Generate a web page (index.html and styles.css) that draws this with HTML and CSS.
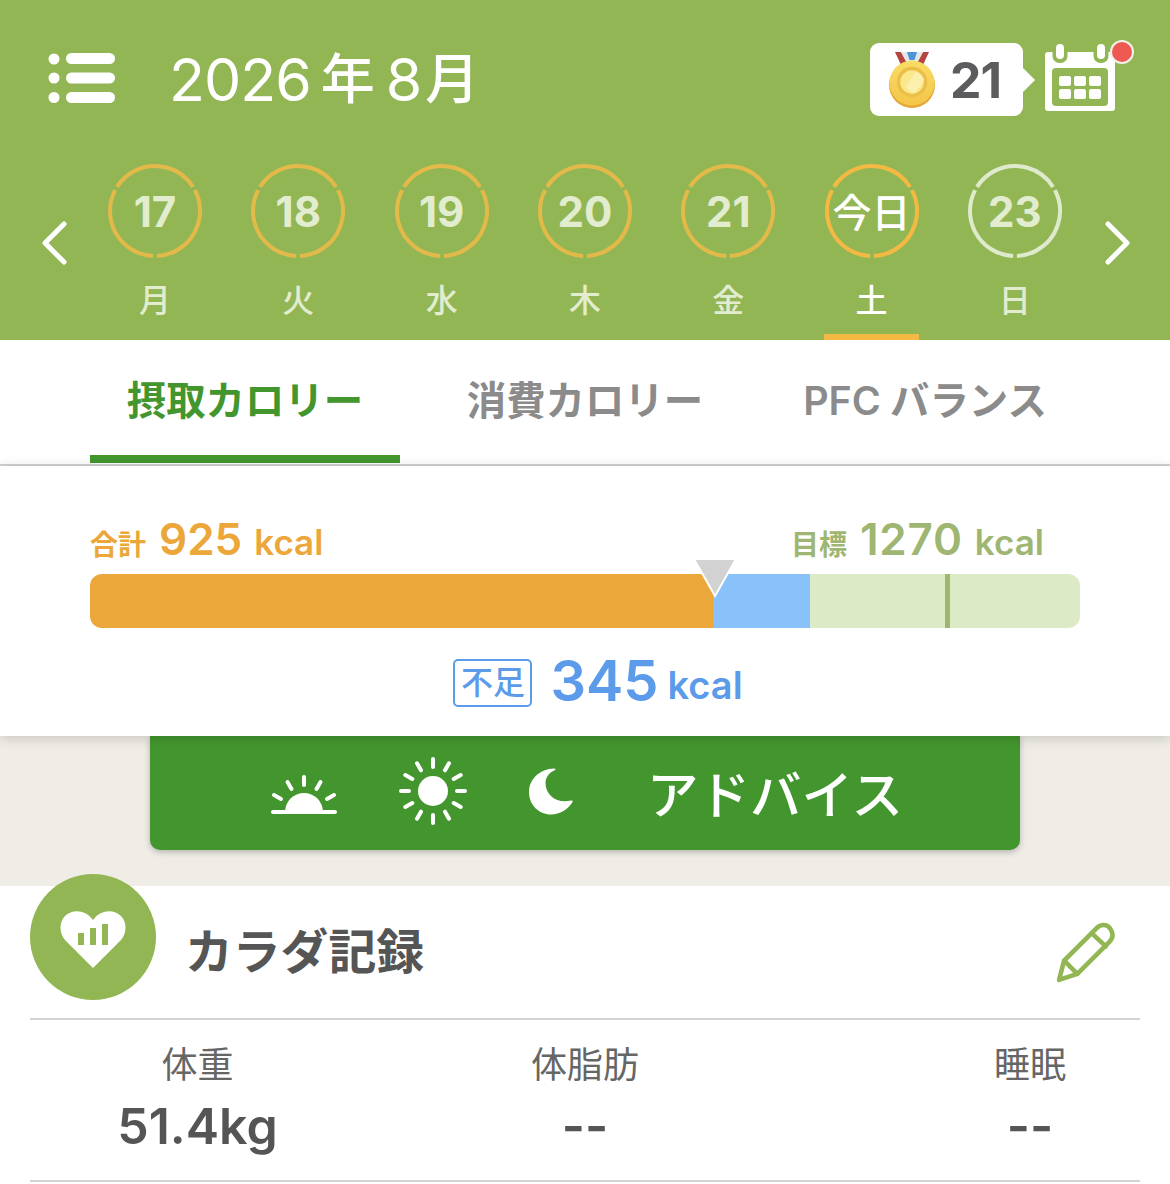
FILE: index.html
```html
<!DOCTYPE html>
<html lang="ja">
<head>
<meta charset="utf-8">
<title>カロリー</title>
<link rel="stylesheet" href="styles.css">
</head>
<body>
<header class="header">
  <div class="topbar">
    <svg class="menu" viewBox="0 0 67 50"><circle cx="6" cy="6" r="5.5"/><circle cx="6" cy="25" r="5.5"/><circle cx="6" cy="44.500" r="5.5"/><rect x="18" y="0" width="49" height="11" rx="5.500"/><rect x="18" y="19.500" width="49" height="11" rx="5.500"/><rect x="18" y="39" width="49" height="11" rx="5.500"/></svg>
    <h1 class="title"><span>2026</span><span class="title-kanji">年</span><span>8</span><span class="title-month">月</span></h1>
    <div class="medal">
      <svg class="medal-icon" viewBox="0 0 46 57">
        <defs>
          <linearGradient id="gold" x1="0" y1="0" x2="0" y2="1"><stop offset="0" stop-color="#f9dc66"/><stop offset="1" stop-color="#f3c648"/></linearGradient>
        </defs>
        <path d="M6 1h6l6 11-6 2z" fill="#b5453f"/>
        <path d="M40 1h-6l-6 11 6 2z" fill="#b5453f"/>
        <path d="M12 1h22l-6 11H18z" fill="#e6e6e6"/>
        <path d="M18 1h10l-2.500 8h-5z" fill="#4c94d8"/>
        <circle cx="23" cy="34" r="23" fill="#e5a736"/>
        <circle cx="23" cy="32" r="22.500" fill="url(#gold)"/>
        <circle cx="23" cy="31" r="13.500" fill="#fbe88d" stroke="#ecbf4a" stroke-width="3.500"/>
        <path d="M17 35 27 21c4 1 7 4 8 8L26 42c-4 0-7-3-9-7z" fill="#fdf3bd" opacity=".7"/>
      </svg>
      <span class="medal-count">21</span>
    </div>
    <div class="calendar">
      <svg class="calendar-icon" viewBox="0 0 70 67">
        <path class="cal-body" d="M3 8h64a3 3 0 0 1 3 3v53a3 3 0 0 1-3 3H3a3 3 0 0 1-3-3V11a3 3 0 0 1 3-3z"/>
        <rect class="cal-gap" x="7.500" y="0" width="15" height="19" rx="7"/>
        <rect class="cal-gap" x="48.500" y="0" width="15" height="19" rx="7"/>
        <rect class="cal-ring" x="11" y="0" width="8" height="15" rx="4"/>
        <rect class="cal-ring" x="52" y="0" width="8" height="15" rx="4"/>
        <rect class="cal-gap" x="7" y="24" width="56" height="38" rx="4"/>
        <rect class="cal-ring" x="14" y="32" width="12" height="10" rx="2"/><rect class="cal-ring" x="29" y="32" width="12" height="10" rx="2"/><rect class="cal-ring" x="44" y="32" width="12" height="10" rx="2"/>
        <rect class="cal-ring" x="14" y="45" width="12" height="10" rx="2"/><rect class="cal-ring" x="29" y="45" width="12" height="10" rx="2"/><rect class="cal-ring" x="44" y="45" width="12" height="10" rx="2"/>
      </svg>
      <span class="cal-dot"></span>
    </div>
  </div>
  <div class="days">
    <div class="nav nav-prev"><svg class="chevron" viewBox="0 0 26 44"><path d="M23 3 4 22l19 19"/></svg></div>
    <div class="day">
      <div class="ring"><svg viewBox="0 0 96 96"><circle cx="48" cy="48" r="45" pathLength="300" stroke-dasharray="96 4" transform="rotate(-27.600 48 48)"/></svg><span>17</span></div>
      <div class="weekday">月</div>
    </div>
    <div class="day">
      <div class="ring"><svg viewBox="0 0 96 96"><circle cx="48" cy="48" r="45" pathLength="300" stroke-dasharray="96 4" transform="rotate(-27.600 48 48)"/></svg><span>18</span></div>
      <div class="weekday">火</div>
    </div>
    <div class="day">
      <div class="ring"><svg viewBox="0 0 96 96"><circle cx="48" cy="48" r="45" pathLength="300" stroke-dasharray="96 4" transform="rotate(-27.600 48 48)"/></svg><span>19</span></div>
      <div class="weekday">水</div>
    </div>
    <div class="day">
      <div class="ring"><svg viewBox="0 0 96 96"><circle cx="48" cy="48" r="45" pathLength="300" stroke-dasharray="96 4" transform="rotate(-27.600 48 48)"/></svg><span>20</span></div>
      <div class="weekday">木</div>
    </div>
    <div class="day">
      <div class="ring"><svg viewBox="0 0 96 96"><circle cx="48" cy="48" r="45" pathLength="300" stroke-dasharray="96 4" transform="rotate(-27.600 48 48)"/></svg><span>21</span></div>
      <div class="weekday">金</div>
    </div>
    <div class="day day-today">
      <div class="ring"><svg viewBox="0 0 96 96"><circle cx="48" cy="48" r="45" pathLength="300" stroke-dasharray="96 4" transform="rotate(-27.600 48 48)"/></svg><span>今日</span></div>
      <div class="weekday">土</div>
      <div class="day-mark"></div>
    </div>
    <div class="day day-future">
      <div class="ring"><svg viewBox="0 0 96 96"><circle cx="48" cy="48" r="45" pathLength="300" stroke-dasharray="96 4" transform="rotate(-27.600 48 48)"/></svg><span>23</span></div>
      <div class="weekday">日</div>
    </div>
    <div class="nav nav-next"><svg class="chevron" viewBox="0 0 26 44"><path d="M3 3l19 19L3 41"/></svg></div>
  </div>
</header>

<nav class="tabs">
  <div class="tab tab-active">摂取カロリー</div>
  <div class="tab">消費カロリー</div>
  <div class="tab"><span class="tab-latin">PFC</span> バランス</div>
</nav>

<section class="summary">
  <div class="summary-labels">
    <div class="sum sum-total"><span class="sum-cap">合計</span><span class="sum-num">925</span><span class="sum-unit">kcal</span></div>
    <div class="sum sum-goal"><span class="sum-cap">目標</span><span class="sum-num">1270</span><span class="sum-unit">kcal</span></div>
  </div>
  <div class="bar">
    <div class="bar-eaten"></div>
    <div class="bar-short"></div>
    <div class="bar-rest"></div>
    <div class="bar-goal"></div>
    <svg class="bar-pointer" viewBox="0 0 44 40"><path d="M1 1h42L22 38z"/></svg>
  </div>
  <div class="deficit"><span class="deficit-tag">不足</span><span class="deficit-num">345</span><span class="deficit-unit">kcal</span></div>
</section>

<section class="advice-wrap">
  <div class="advice">
    <svg class="adv-icon adv-rise" viewBox="0 0 68 40">
      <path class="fill" d="M15 38a19 19 0 0 1 38 0z"/>
      <path class="stroke" d="M3 38h62M34 3v8M17.500 8l4 7M50.500 8l-4 7M4 21l7 4M64 21l-7 4"/>
    </svg>
    <svg class="adv-icon adv-sun" viewBox="0 0 68 68">
      <circle class="fill" cx="34" cy="34" r="15"/>
      <path class="stroke" d="M34 2v8M34 58v8M2 34h8M58 34h8M18 6.300l4 7M46 54.700l4 7M6.300 18l7 4M54.700 46l7 4M6.300 50l7-4M54.700 22l7-4M18 61.700l4-7M46 13.300l4-7"/>
    </svg>
    <svg class="adv-icon adv-moon" viewBox="0 0 46 48">
      <path class="fill" d="M26 1.500C12 2 1 12 1 25c0 13 10 22.500 22 22.500 9 0 17-5 21.500-12.500.5-1-.3-1.800-1.500-1.500C30 37 17.500 29 17.500 16c0-5 3-10 9.500-13 1-.5.500-1.500-1-1.500z"/>
    </svg>
    <span class="advice-text">アドバイス</span>
  </div>
</section>

<section class="body-card">
  <div class="body-head">
    <div class="body-badge">
      <svg viewBox="0 0 66 60">
        <path class="heart" d="M33 58 5 30C-1 23-1 12 5 6c7-7 20-7 28 4C41-1 54-1 61 6c6 6 6 17 0 24z"/>
        <rect class="bars" x="18" y="23" width="6" height="12"/><rect class="bars" x="30" y="18" width="6" height="17"/><rect class="bars" x="42" y="14" width="6" height="21"/>
      </svg>
    </div>
    <h2 class="body-title">カラダ記録</h2>
    <svg class="pencil" viewBox="0 0 62 62">
      <path d="M4 58l5-19L41 7c4-4 10-4 13 0s4 9 0 13L22 52z"/>
      <path d="M9 39l13 13M36 12l14 13"/>
    </svg>
  </div>
  <div class="stats">
    <div class="stat stat-weight"><div class="stat-label">体重</div><div class="stat-value">51.4kg</div></div>
    <div class="stat stat-fat"><div class="stat-label">体脂肪</div><div class="stat-value">--</div></div>
    <div class="stat stat-sleep"><div class="stat-label">睡眠</div><div class="stat-value">--</div></div>
  </div>
</section>
</body>
</html>
```

FILE: styles.css
```css
* { box-sizing: border-box; }
html, body { margin: 0; padding: 0; }
body {
  width: 1170px;
  height: 1184px;
  overflow: hidden;
  background: #fff;
  font-family: Inter, "Noto Sans CJK JP", sans-serif;
  color: #555;
}

/* header */
.header { height: 340px; background: #93b655; display: flex; flex-direction: column; }
.topbar { height: 163px; padding: 43px 55px 0 48px; display: flex; align-items: flex-start; }
.menu { width: 67px; height: 50px; margin-top: 10px; fill: #fff; flex: none; }
.title { margin: 0 0 0 54px; font-size: 59px; line-height: 74px; font-weight: 400; color: #fff; display: flex; align-items: center; letter-spacing: -1px; }
.title-kanji { font-size: 54px; margin: 0 12px 0 10px; font-weight: 500; }
.title-month { font-size: 54px; margin-left: 4px; font-weight: 500; }

.medal { margin-left: auto; width: 153px; height: 73px; background: #fff; border-radius: 9px; position: relative; display: flex; align-items: center; padding-left: 19px; }
.medal::after { content: ""; position: absolute; right: -12px; top: 25px; border-left: 12px solid #fff; border-top: 12px solid transparent; border-bottom: 12px solid transparent; }
.medal-icon { width: 46px; height: 57px; flex: none; margin-top: 0; }
.medal-count { font-size: 50px; font-weight: 700; color: #5c5c5e; margin-left: 15px; letter-spacing: -1px; }

.calendar { margin-left: 22px; width: 70px; height: 67px; margin-top: 1px; position: relative; }
.calendar-icon { width: 70px; height: 67px; display: block; }
.cal-body, .cal-ring { fill: #fff; }
.cal-gap { fill: #93b655; }
.cal-dot { position: absolute; left: 65px; top: -4px; width: 24px; height: 24px; border-radius: 50%; background: #ee5a52; border: 2px solid #f2f2ec; }

.days { flex: 1; display: flex; }
.nav { flex: none; display: flex; align-items: flex-start; padding-top: 58px; }
.nav-prev { width: 83.400px; padding-left: 41px; }
.nav-next { width: 83.500px; padding-left: 19px; }
.chevron { width: 26px; height: 44px; flex: none; fill: none; stroke: #fff; stroke-width: 5; stroke-linecap: round; stroke-linejoin: round; }
.day { width: 143.300px; flex: none; display: flex; flex-direction: column; align-items: center; color: #e2edd0; }
.ring { width: 96px; height: 96px; position: relative; display: flex; align-items: center; justify-content: center; font-size: 42px; font-weight: 700; }
.ring svg { position: absolute; inset: 0; width: 96px; height: 96px; fill: none; stroke: #e3b94a; stroke-width: 4; }
.ring span { position: relative; }
.weekday { margin-top: 19px; font-size: 32px; line-height: 46px; font-weight: 500; }
.day-mark { margin-top: auto; width: 95px; height: 6px; background: #f4b943; }
.day-today { color: #fff; }
.day-today .ring svg { stroke: #f4b943; }
.day-today .ring { font-size: 39px; font-weight: 500; white-space: nowrap; }
.day-today .ring span { top: -1px; }
.day-future .ring svg { stroke: #dfeacd; }

/* tabs */
.tabs { height: 126px; background: #fff; border-bottom: 2px solid #d2d2d2; padding: 0 90px; display: flex; justify-content: space-between; }
.tab { width: 310px; padding-top: 36px; height: 123px; text-align: center; font-size: 39.400px; line-height: 50px; font-weight: 700; color: #8b8b8b; white-space: nowrap; }
.tab-active { color: #43962e; border-bottom: 8px solid #43962e; }
.tab-latin { font-weight: 600; }

/* summary */
.summary { height: 270px; background: #fff; padding: 46px 90px 0; position: relative; z-index: 2; box-shadow: 0 2px 12px rgba(0,0,0,.18); }
.summary-labels { display: flex; justify-content: space-between; height: 62px; }
.sum { display: flex; align-items: baseline; height: 54px; font-weight: 600; }
.sum-total { color: #eba73a; }
.sum-goal { color: #9fb672; margin-right: 36px; }
.sum-goal .sum-num { letter-spacing: .8px; }
.sum-cap { font-size: 28px; margin-right: 13px; font-weight: 600; }
.sum-num { font-size: 44px; margin-right: 12px; }
.sum-unit { font-size: 35px; }

.bar { height: 54px; border-radius: 12px; overflow: visible; display: flex; position: relative; }
.bar-eaten { width: 623px; background: #eba73a; border-radius: 12px 0 0 12px; }
.bar-short { width: 97px; background: #89c2fb; }
.bar-rest { flex: 1; background: #dceac6; border-radius: 0 12px 12px 0; }
.bar-goal { position: absolute; left: 855px; top: 0; bottom: 0; width: 5px; background: #9fb672; }
.bar-pointer { position: absolute; left: 603px; top: -16px; width: 44px; height: 40px; fill: #d2d2d2; stroke: #fff; stroke-width: 2; }

.deficit { display: flex; justify-content: center; align-items: center; height: 48px; margin-top: 31px; padding-left: 26px; color: #5b9bea; font-weight: 600; }
.deficit-tag { width: 79px; height: 48px; border: 2.500px solid #5b9bea; border-radius: 5px; font-size: 32px; line-height: 43px; text-align: center; font-weight: 500; margin-right: 18px; }
.deficit-num { font-size: 56px; margin-right: 9px; margin-top: -4px; }
.deficit-unit { font-size: 38px; padding-top: 4px; }

/* advice */
.advice-wrap { height: 150px; background: #f0ede7; padding: 0 150px; }
.advice { width: 870px; height: 114px; background: #43962e; border-radius: 0 0 10px 10px; box-shadow: 0 2px 6px rgba(0,0,0,.25); display: flex; align-items: center; padding-left: 120px; position: relative; z-index: 1; }
.adv-icon { flex: none; }
.fill { fill: #fff; }
.stroke { fill: none; stroke: #fff; stroke-width: 4; stroke-linecap: round; }
.adv-rise { width: 68px; height: 40px; margin-top: 2px; }
.adv-sun { width: 68px; height: 68px; margin-left: 61px; margin-top: -4px; }
.adv-moon { width: 46px; height: 48px; margin-left: 61px; margin-top: -4px; }
.advice-text { color: #fff; font-size: 51.500px; line-height: 60px; font-weight: 500; margin-left: 73px; padding-top: 3px; white-space: nowrap; }

/* card */
.body-card { padding: 0 30px; background: #fff; }
.body-head { height: 134px; border-bottom: 2px solid #d2d2d2; display: flex; align-items: center; position: relative; }
.body-badge { width: 126px; height: 126px; border-radius: 50%; background: #93b655; margin-top: -30px; display: flex; align-items: center; justify-content: center; flex: none; position: relative; z-index: 3; }
.body-badge svg { width: 66px; height: 60px; margin-top: 6px; }
.heart { fill: #fff; }
.bars { fill: #93b655; }
.body-title { margin: 0 0 0 29px; font-size: 47.800px; line-height: 60px; font-weight: 700; color: #555; white-space: nowrap; }
.pencil { width: 63px; height: 63px; margin-left: auto; margin-right: 22px; margin-top: 1px; fill: none; stroke: #93b655; stroke-width: 4.500; stroke-linejoin: round; stroke-linecap: round; }

.stats { height: 162px; border-bottom: 2px solid #d2d2d2; display: flex; }
.stat { text-align: center; flex: none; padding-top: 22px; }
.stat-weight { width: 335px; }
.stat-fat { width: 440px; }
.stat-sleep { width: 335px; padding-left: 115px; }
.stat-label { font-size: 36px; line-height: 46px; color: #666; }
.stat-value { font-size: 50px; line-height: 60px; font-weight: 600; color: #555; margin-top: 8px; }
```
